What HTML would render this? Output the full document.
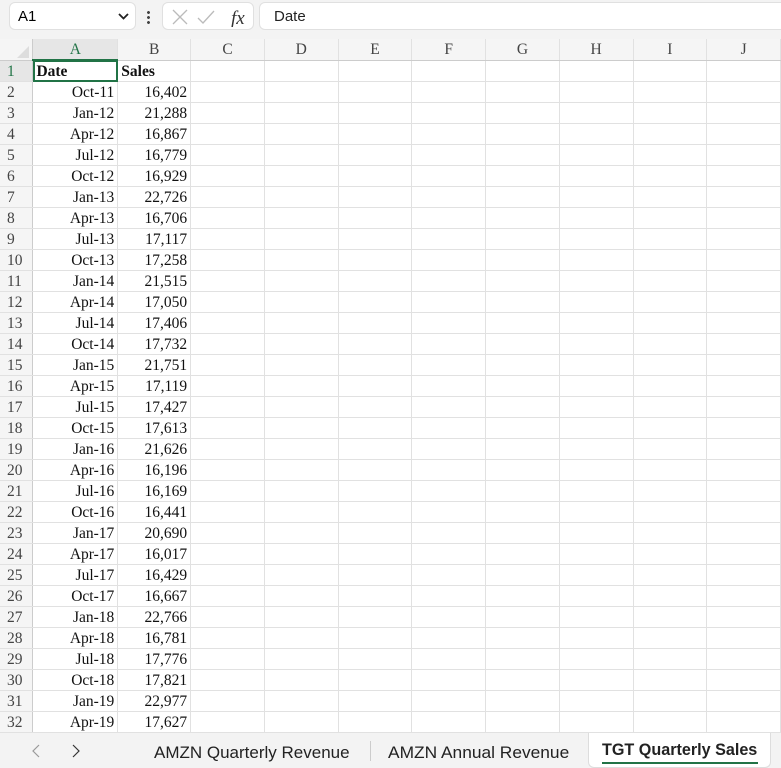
<!DOCTYPE html><html><head><style>
body{margin:0;width:781px;height:768px;overflow:hidden;background:#fff;font-family:"Liberation Serif",serif;position:relative}
.top{position:absolute;left:0;top:0;width:781px;height:39px;background:#f3f3f3}
.box{position:absolute;top:2px;height:28px;background:#fff;border:1px solid #e0e0e0;border-radius:6px;box-sizing:border-box;font-family:"Liberation Sans",sans-serif;font-size:15px}
table{position:absolute;left:0;top:39px;border-collapse:collapse;table-layout:fixed}
td{height:18px;padding:2px 3px 0 3px;border-right:1px solid #e1e1e1;border-bottom:1px solid #e1e1e1;font-size:15.5px;white-space:nowrap;overflow:hidden;text-align:right;color:#111}
tr.h td{background:#f5f5f5;text-align:center;color:#444;border-bottom:1px solid #ccc}
td.rh{background:#f5f5f5;text-align:left;color:#444;padding-left:7px;border-right:1px solid #ccc}
.tabs{position:absolute;left:0;top:733px;width:781px;height:35px;background:#f3f3f3;font-family:"Liberation Sans",sans-serif;font-size:17px;color:#222}
.tabs span{position:absolute;top:10px;transform-origin:0 0}
</style></head><body>
<div class="top">
<div class="box" style="left:9px;width:127px"><span style="position:absolute;left:8px;top:5px">A1</span><svg style="position:absolute;right:6px;top:10px" width="11" height="8"><path d="M1 1l4.5 4.5L10 1" stroke="#222" stroke-width="1.8" fill="none"/></svg></div>
<div style="position:absolute;left:147px;top:10px;width:3px;height:14px;background:radial-gradient(circle,#444 1.3px,transparent 1.6px) 0 0/3px 5px"></div>
<div class="box" style="left:162px;width:92px"><svg style="position:absolute;left:8px;top:6px" width="80" height="18"><path d="M2 1l14 14M16 1L2 15" stroke="#bbb" stroke-width="1.3"/><path d="M27 9l5 5 11-12" stroke="#bbb" stroke-width="1.3" fill="none"/><text x="60" y="15" font-family="Liberation Serif" font-style="italic" font-size="19" fill="#333">fx</text></svg></div>
<div class="box" style="left:259px;width:530px"><span style="position:absolute;left:14px;top:5px;color:#222">Date</span></div>
</div>
<table>
<colgroup><col style="width:33px"><col style="width:85px"><col style="width:73px"><col style="width:74px"><col style="width:74px"><col style="width:74px"><col style="width:74px"><col style="width:74px"><col style="width:74px"><col style="width:74px"><col style="width:74px"></colgroup>
<tr class="h"><td style="background:#f5f5f5;border-right:1px solid #ccc"><svg width="12" height="12" style="float:right;margin-top:4px"><path d="M12 0V12H0z" fill="#ddd"/></svg></td><td style="color:#217346;background:#e6e6e6;border-bottom:2px solid #217346">A</td><td>B</td><td>C</td><td>D</td><td>E</td><td>F</td><td>G</td><td>H</td><td>I</td><td>J</td></tr>
<tr><td class="rh" style="color:#217346;background:#e6e6e6">1</td><td style="text-align:left;font-weight:bold;outline:2px solid #217346;outline-offset:-2px">Date</td><td style="text-align:left;font-weight:bold">Sales</td><td></td><td></td><td></td><td></td><td></td><td></td><td></td><td></td></tr>
<tr><td class="rh">2</td><td>Oct-11</td><td>16,402</td><td></td><td></td><td></td><td></td><td></td><td></td><td></td><td></td></tr>
<tr><td class="rh">3</td><td>Jan-12</td><td>21,288</td><td></td><td></td><td></td><td></td><td></td><td></td><td></td><td></td></tr>
<tr><td class="rh">4</td><td>Apr-12</td><td>16,867</td><td></td><td></td><td></td><td></td><td></td><td></td><td></td><td></td></tr>
<tr><td class="rh">5</td><td>Jul-12</td><td>16,779</td><td></td><td></td><td></td><td></td><td></td><td></td><td></td><td></td></tr>
<tr><td class="rh">6</td><td>Oct-12</td><td>16,929</td><td></td><td></td><td></td><td></td><td></td><td></td><td></td><td></td></tr>
<tr><td class="rh">7</td><td>Jan-13</td><td>22,726</td><td></td><td></td><td></td><td></td><td></td><td></td><td></td><td></td></tr>
<tr><td class="rh">8</td><td>Apr-13</td><td>16,706</td><td></td><td></td><td></td><td></td><td></td><td></td><td></td><td></td></tr>
<tr><td class="rh">9</td><td>Jul-13</td><td>17,117</td><td></td><td></td><td></td><td></td><td></td><td></td><td></td><td></td></tr>
<tr><td class="rh">10</td><td>Oct-13</td><td>17,258</td><td></td><td></td><td></td><td></td><td></td><td></td><td></td><td></td></tr>
<tr><td class="rh">11</td><td>Jan-14</td><td>21,515</td><td></td><td></td><td></td><td></td><td></td><td></td><td></td><td></td></tr>
<tr><td class="rh">12</td><td>Apr-14</td><td>17,050</td><td></td><td></td><td></td><td></td><td></td><td></td><td></td><td></td></tr>
<tr><td class="rh">13</td><td>Jul-14</td><td>17,406</td><td></td><td></td><td></td><td></td><td></td><td></td><td></td><td></td></tr>
<tr><td class="rh">14</td><td>Oct-14</td><td>17,732</td><td></td><td></td><td></td><td></td><td></td><td></td><td></td><td></td></tr>
<tr><td class="rh">15</td><td>Jan-15</td><td>21,751</td><td></td><td></td><td></td><td></td><td></td><td></td><td></td><td></td></tr>
<tr><td class="rh">16</td><td>Apr-15</td><td>17,119</td><td></td><td></td><td></td><td></td><td></td><td></td><td></td><td></td></tr>
<tr><td class="rh">17</td><td>Jul-15</td><td>17,427</td><td></td><td></td><td></td><td></td><td></td><td></td><td></td><td></td></tr>
<tr><td class="rh">18</td><td>Oct-15</td><td>17,613</td><td></td><td></td><td></td><td></td><td></td><td></td><td></td><td></td></tr>
<tr><td class="rh">19</td><td>Jan-16</td><td>21,626</td><td></td><td></td><td></td><td></td><td></td><td></td><td></td><td></td></tr>
<tr><td class="rh">20</td><td>Apr-16</td><td>16,196</td><td></td><td></td><td></td><td></td><td></td><td></td><td></td><td></td></tr>
<tr><td class="rh">21</td><td>Jul-16</td><td>16,169</td><td></td><td></td><td></td><td></td><td></td><td></td><td></td><td></td></tr>
<tr><td class="rh">22</td><td>Oct-16</td><td>16,441</td><td></td><td></td><td></td><td></td><td></td><td></td><td></td><td></td></tr>
<tr><td class="rh">23</td><td>Jan-17</td><td>20,690</td><td></td><td></td><td></td><td></td><td></td><td></td><td></td><td></td></tr>
<tr><td class="rh">24</td><td>Apr-17</td><td>16,017</td><td></td><td></td><td></td><td></td><td></td><td></td><td></td><td></td></tr>
<tr><td class="rh">25</td><td>Jul-17</td><td>16,429</td><td></td><td></td><td></td><td></td><td></td><td></td><td></td><td></td></tr>
<tr><td class="rh">26</td><td>Oct-17</td><td>16,667</td><td></td><td></td><td></td><td></td><td></td><td></td><td></td><td></td></tr>
<tr><td class="rh">27</td><td>Jan-18</td><td>22,766</td><td></td><td></td><td></td><td></td><td></td><td></td><td></td><td></td></tr>
<tr><td class="rh">28</td><td>Apr-18</td><td>16,781</td><td></td><td></td><td></td><td></td><td></td><td></td><td></td><td></td></tr>
<tr><td class="rh">29</td><td>Jul-18</td><td>17,776</td><td></td><td></td><td></td><td></td><td></td><td></td><td></td><td></td></tr>
<tr><td class="rh">30</td><td>Oct-18</td><td>17,821</td><td></td><td></td><td></td><td></td><td></td><td></td><td></td><td></td></tr>
<tr><td class="rh">31</td><td>Jan-19</td><td>22,977</td><td></td><td></td><td></td><td></td><td></td><td></td><td></td><td></td></tr>
<tr><td class="rh">32</td><td>Apr-19</td><td>17,627</td><td></td><td></td><td></td><td></td><td></td><td></td><td></td><td></td></tr>
</table>
<div class="tabs">
<svg style="position:absolute;left:30px;top:11px" width="60" height="14"><path d="M9 1L3 7l6 6" stroke="#999" stroke-width="1.2" fill="none"/><path d="M43 1l6 6-6 6" stroke="#333" stroke-width="1.2" fill="none"/></svg>
<span style="left:154px">AMZN Quarterly Revenue</span>
<div style="position:absolute;left:370px;top:8px;width:1px;height:20px;background:#ccc"></div>
<span style="left:388px;transform:scaleX(1.02)">AMZN Annual Revenue</span>
<div style="position:absolute;left:588px;top:0;width:183px;height:35px;background:#fff;border-radius:0 0 6px 6px;border:1px solid #ddd;border-top:none;box-sizing:border-box"></div>
<span style="left:602px;top:7px;font-weight:bold;transform:scaleX(0.95)">TGT Quarterly Sales</span>
<div style="position:absolute;left:602px;top:29px;width:156px;height:2px;background:#217346"></div>
</div>
</body></html>
